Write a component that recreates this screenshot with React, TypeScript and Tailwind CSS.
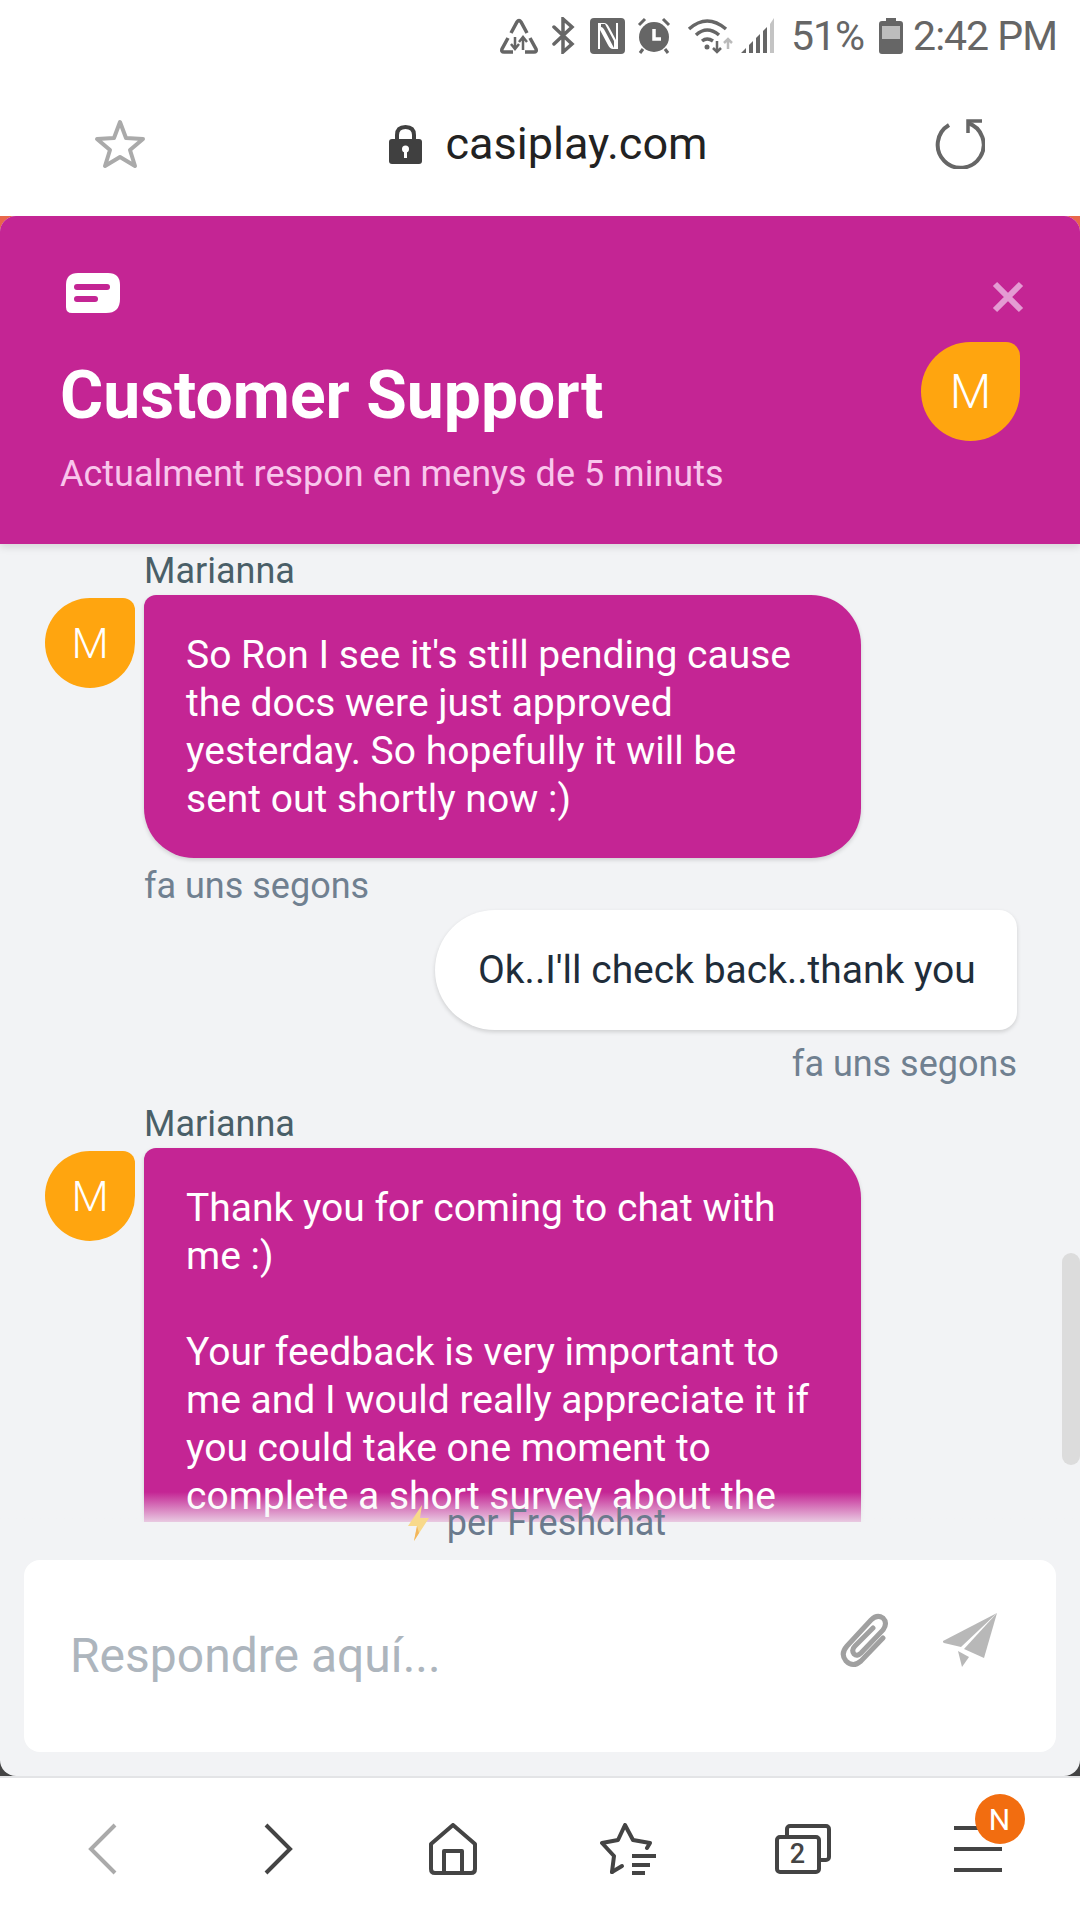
import React from 'react';

const roboto = "font-['Roboto',sans-serif]";

const StatusIcons = () => (
  <div className="flex items-center text-[#666666]">
    {/* data saver / recycle */}
    <svg width="38" height="36" viewBox="0 0 38 36" fill="none" stroke="currentColor" strokeWidth="3.5">
      <path d="M11 15 L17 4 Q19 1 21 4 L27 15" />
      <path d="M8 20 L2 31 Q1 34 4 34 L13 34" />
      <path d="M30 20 L36 31 Q37 34 34 34 L25 34" />
      <path d="M15 19 V31 M11 26 L15 31 L19 26" strokeWidth="2.5" />
      <path d="M23 32 V19 M19 24 L23 19 L27 24" strokeWidth="2.5" />
    </svg>
    {/* bluetooth */}
    <svg className="ml-[14px]" width="23" height="37" viewBox="0 0 23 37" fill="none" stroke="currentColor" strokeWidth="3.5" strokeLinecap="round">
      <path d="M2 10 L20 27 L11 35 V2 L20 10 L2 27" />
    </svg>
    {/* nfc */}
    <svg className="ml-[15px]" width="35" height="36" viewBox="0 0 35 36">
      <rect width="35" height="36" rx="4" fill="currentColor" />
      <path d="M8 5 H14 Q17 5 19 9 L26 22 V5 H28 V31 H23 Q20 31 18 27 L10 12 V31 H8 Z" fill="#ffffff" />
      <path d="M11 6 H15 L24 23 V30 L15 13 Q13 9 11 9 Z" fill="currentColor" />
    </svg>
    {/* alarm */}
    <svg className="ml-[12px]" width="34" height="37" viewBox="0 0 34 37">
      <circle cx="17" cy="20" r="15" fill="currentColor" />
      <path d="M2 8 L8 2 M32 8 L26 2 M6 32 L3 36 M28 32 L31 36" stroke="currentColor" strokeWidth="3" />
      <path d="M17 12 V22 H24" fill="none" stroke="#ffffff" strokeWidth="3.5" />
    </svg>
    {/* wifi */}
    <svg className="ml-[16px]" width="47" height="37" viewBox="0 0 47 37" fill="none" stroke="currentColor" strokeWidth="3.5">
      <path d="M2 12 Q20 -4 39 12" />
      <path d="M9 18 Q20 8 32 18" />
      <path d="M15 24 Q20 20 26 24" />
      <circle cx="20" cy="30" r="2.5" fill="currentColor" stroke="none" />
      <path d="M30 24 V35 M26 31 L30 35 L34 31" strokeWidth="2.5" />
      <path d="M41 32 V22 M37 26 L41 22 L45 26" stroke="#bbbbbb" strokeWidth="2.5" />
    </svg>
    {/* signal */}
    <svg className="ml-[7px]" width="34" height="35" viewBox="0 0 34 35">
      <path d="M0 35 L5 30 V35 Z M8 35 V27 L12 23 V35 Z M15 35 V20 L19 16 V35 Z M22 35 V13 L26 9 V35 Z" fill="currentColor" />
      <path d="M29 35 V6 L33 0 V35 Z" fill="#c4c4c4" />
    </svg>
    <span className={`${roboto} ml-[16px] text-[41px] leading-[72px] tracking-[-1px] whitespace-nowrap`}>51%</span>
    {/* battery */}
    <svg className="ml-[15px]" width="24" height="36" viewBox="0 0 24 36">
      <path d="M7 0 H17 V3 H21 Q24 3 24 6 V33 Q24 36 21 36 H3 Q0 36 0 33 V6 Q0 3 3 3 H7 Z" fill="currentColor" />
      <rect x="3" y="8" width="18" height="13" fill="#bdbdbd" />
    </svg>
    <span className={`${roboto} ml-[10px] text-[41px] leading-[72px] tracking-[-1px] whitespace-nowrap`}>2:42 PM</span>
  </div>
);

const AddressBar = () => (
  <div className="h-[144px] flex items-center justify-between pl-[94px] pr-[95px] pb-[1px]">
    <svg width="52" height="50" viewBox="0 0 52 50" fill="none" stroke="#aaaaaa" strokeWidth="4" strokeLinejoin="round">
      <path d="M26 3 L32 19 L49 20 L36 31 L41 47 L26 38 L11 47 L16 31 L3 20 L20 19 Z" />
    </svg>
    <div className="flex items-center ml-[16px] pt-[1px]">
      <svg width="33" height="39" viewBox="0 0 33 39">
        <path d="M8 17 V10 Q8 2 16.5 2 Q25 2 25 10 V17" fill="none" stroke="#404040" strokeWidth="4" />
        <rect y="14" width="33" height="25" rx="3" fill="#404040" />
        <circle cx="16.5" cy="24" r="3.5" fill="#ffffff" />
        <rect x="15" y="25" width="3" height="8" fill="#ffffff" />
      </svg>
      <span className={`${roboto} ml-[23px] text-[45px] leading-[50px] text-[#222222] whitespace-nowrap`}>casiplay.com</span>
    </div>
    <svg width="50" height="50" viewBox="0 0 50 50" fill="none" stroke="#666666" strokeWidth="4">
      <path d="M14 6 A23 23 0 1 0 33 4" />
      <path d="M33 14 V2 H47" strokeWidth="3.5" />
    </svg>
  </div>
);

const Avatar = ({ big = false }: { big?: boolean }) => (
  <div
    className={
      big
        ? `${roboto} w-[99px] h-[99px] rounded-[50%] rounded-tr-[14px] bg-[#ffa50f] text-white font-light text-[48px] flex items-center justify-center shrink-0`
        : `${roboto} w-[90px] h-[90px] rounded-[50%] rounded-tr-[12px] bg-[#ffa50f] text-white font-light text-[43px] flex items-center justify-center shrink-0 mt-[3px]`
    }
  >
    M
  </div>
);

const AgentMessage = ({ children }: { children: React.ReactNode }) => (
  <>
    <div className="ml-[144px] text-[36px] leading-[40px] text-[#4a5f68]">Marianna</div>
    <div className="flex ml-[45px] mt-[4px] gap-[9px] items-start">
      <Avatar />
      <div className="w-[717px] pl-[42px] pr-[47px] pt-[36px] pb-[35px] bg-[#c42594] text-white text-[39px] leading-[48px] rounded-[50px] rounded-tl-[12px] shadow-[0_2px_4px_rgba(0,0,0,0.15)]">
        {children}
      </div>
    </div>
  </>
);

const BottomNav = () => (
  <nav className="h-[142px] bg-white grid grid-cols-6 px-[15px] items-center justify-items-center">
    <svg width="30" height="52" viewBox="0 0 30 52" fill="none" stroke="#aaaaaa" strokeWidth="4">
      <path d="M27 2 L3 26 L27 50" />
    </svg>
    <svg width="30" height="52" viewBox="0 0 30 52" fill="none" stroke="#444444" strokeWidth="4">
      <path d="M3 2 L27 26 L3 50" />
    </svg>
    <svg width="50" height="52" viewBox="0 0 50 52" fill="none" stroke="#444444" strokeWidth="4" strokeLinejoin="round">
      <path d="M25 2 L47 21 V46 Q47 50 43 50 H7 Q3 50 3 46 V21 Z" />
      <path d="M16 50 V28 H34 V50" />
    </svg>
    <svg width="56" height="52" viewBox="0 0 56 52" fill="none" stroke="#444444" strokeWidth="4" strokeLinecap="round" strokeLinejoin="round">
      <path d="M12 49 L14 33 L2 20 L18 17 L25 2 L33 17 L50 20 L47 25" />
      <path d="M12 49 L22 43" />
      <path d="M32 33 H56 M32 42 H50 M32 50 H45" strokeWidth="4" strokeLinecap="butt" />
    </svg>
    <div className="relative w-[56px] h-[50px]">
      <div className="absolute right-0 top-0 w-[46px] h-[38px] border-[4px] border-[#444444] rounded-[5px]" />
      <div className={`${roboto} absolute left-0 bottom-0 w-[46px] h-[39px] bg-white border-[4px] border-[#444444] rounded-[5px] flex items-center justify-center text-[27px] font-medium leading-none text-[#444444]`}>
        2
      </div>
    </div>
    <div className="relative w-[48px] h-[46px] flex flex-col justify-between">
      <div className="h-[4px] bg-[#444444]" />
      <div className="h-[4px] bg-[#444444]" />
      <div className="h-[4px] bg-[#444444]" />
      <div className={`${roboto} absolute left-[21px] -top-[32px] w-[50px] h-[50px] rounded-full bg-[#f26d10] text-white text-[30px] flex items-center justify-center`}>
        N
      </div>
    </div>
  </nav>
);

export default function App() {
  return (
    <div className={`${roboto} w-[1080px] h-[1920px] bg-white flex flex-col overflow-hidden`}>
      <div className="h-[72px] flex justify-end items-center pr-[23px] pb-[1px]">
        <StatusIcons />
      </div>
      <AddressBar />

      {/* Chat widget */}
      <div className="h-[1560px] bg-[linear-gradient(#e8674a_50%,#444444_50%)]">
        <div className="relative h-full bg-[#f2f3f5] rounded-[16px] flex flex-col overflow-hidden">
          <header className="relative z-10 h-[328px] bg-[#c42594] flex justify-between shrink-0 shadow-[0_3px_8px_rgba(0,0,0,0.12)]">
            <div className="pl-[66px] pt-[57px]">
              <svg width="54" height="40" viewBox="0 0 54 40">
                <path d="M12 0 H42 Q54 0 54 12 V26 Q54 40 40 40 H6 Q0 40 0 34 V12 Q0 0 12 0 Z" fill="#ffffff" />
                <rect x="8" y="11" width="36" height="6" rx="3" fill="#c42594" />
                <rect x="8" y="23" width="24" height="6" rx="3" fill="#c42594" />
              </svg>
              <h1 className="-ml-[6px] mt-[48px] text-[66px] leading-[70px] font-bold text-white whitespace-nowrap">Customer Support</h1>
              <p className="-ml-[6px] mt-[21px] text-[36px] leading-[44px] text-[#f9c6ec] whitespace-nowrap">Actualment respon en menys de 5 minuts</p>
            </div>
            <div className="pr-[56px] pt-[65px] flex flex-col items-end">
              <svg width="32" height="32" viewBox="0 0 32 32" stroke="#e49bd3" strokeWidth="6">
                <path d="M3 3 L29 29 M29 3 L3 29" />
              </svg>
              <div className="mt-[29px] mr-[4px]">
                <Avatar big />
              </div>
            </div>
          </header>

          {/* Messages */}
          <div className="relative flex-1 min-h-0 overflow-hidden pt-[7px]">
            <AgentMessage>So Ron I see it's still pending cause the docs were just approved yesterday. So hopefully it will be sent out shortly now :)</AgentMessage>
            <div className="ml-[144px] mt-[8px] text-[36px] leading-[40px] text-[#708090]">fa uns segons</div>
            <div className="flex justify-end pr-[63px] mt-[4px]">
              <div className="h-[120px] w-[582px] pl-[43px] flex items-center bg-white text-[39px] text-[#1f2d3a] rounded-l-[60px] rounded-r-[18px] shadow-[0_2px_4px_rgba(0,0,0,0.15)] whitespace-nowrap">
                Ok..I'll check back..thank you
              </div>
            </div>
            <div className="mt-[14px] pr-[63px] text-right text-[36px] leading-[40px] text-[#708090]">fa uns segons</div>
            <div className="h-[20px]" />
            <AgentMessage>
              Thank you for coming to chat with me :)
              <br />
              <br />
              Your feedback is very important to me and I would really appreciate it if you could take one moment to complete a short survey about the chat you just had with me.
            </AgentMessage>
            <div className="absolute left-0 right-0 bottom-0 h-[30px] bg-linear-to-b from-[#f2f3f5]/0 to-[#f2f3f5]/80" />
            <div className="absolute right-0 top-[709px] w-[18px] h-[212px] rounded-[9px] bg-[#dcdcdc]" />
          </div>

          {/* Powered by */}
          <div className="relative -mt-[23px] h-[48px] flex items-center justify-center gap-[18px] pr-[6px] text-[36px] text-[#6b7a8d] shrink-0">
            <svg width="21" height="36" viewBox="0 0 21 36">
              <path d="M14 0 L0 21 H9 L6 36 L21 13 H12 Z" fill="#f8d98a" />
              <path d="M9 21 L6 36 L11 28 Z" fill="#f3b65c" />
            </svg>
            <span>per Freshchat</span>
          </div>

          {/* Reply box */}
          <div className="mx-[24px] mt-[13px] mb-[24px] h-[192px] bg-white rounded-[16px] flex items-center shrink-0">
            <span className="ml-[46px] text-[48px] text-[#adb5bd] flex-1 whitespace-nowrap">Respondre aquí...</span>
            <svg className="mb-[32px]" width="50" height="56" viewBox="0 0 50 56" fill="none" stroke="#a0a0a0" strokeWidth="5" strokeLinecap="round">
              <path d="M44 26 L22 49 Q14 56 7 49 Q1 42 8 34 L32 8 Q38 2 44 6 Q49 11 44 18 L22 41 Q18 45 15 42 Q12 38 16 34 L34 16" />
            </svg>
            <svg className="ml-[54px] mr-[59px] mb-[32px]" width="54" height="54" viewBox="0 0 54 54" fill="#b8b8b8">
              <path d="M54 0 L0 28 Q-1 29 1 30 L18 34 Z" />
              <path d="M54 0 L21 36 L41 45 Z" />
              <path d="M15 38 L26 44 L19 54 Z" />
            </svg>
          </div>
        </div>
      </div>

      <div className="h-[2px] bg-[#e3e4e6] shrink-0" />
      <BottomNav />
    </div>
  );
}
